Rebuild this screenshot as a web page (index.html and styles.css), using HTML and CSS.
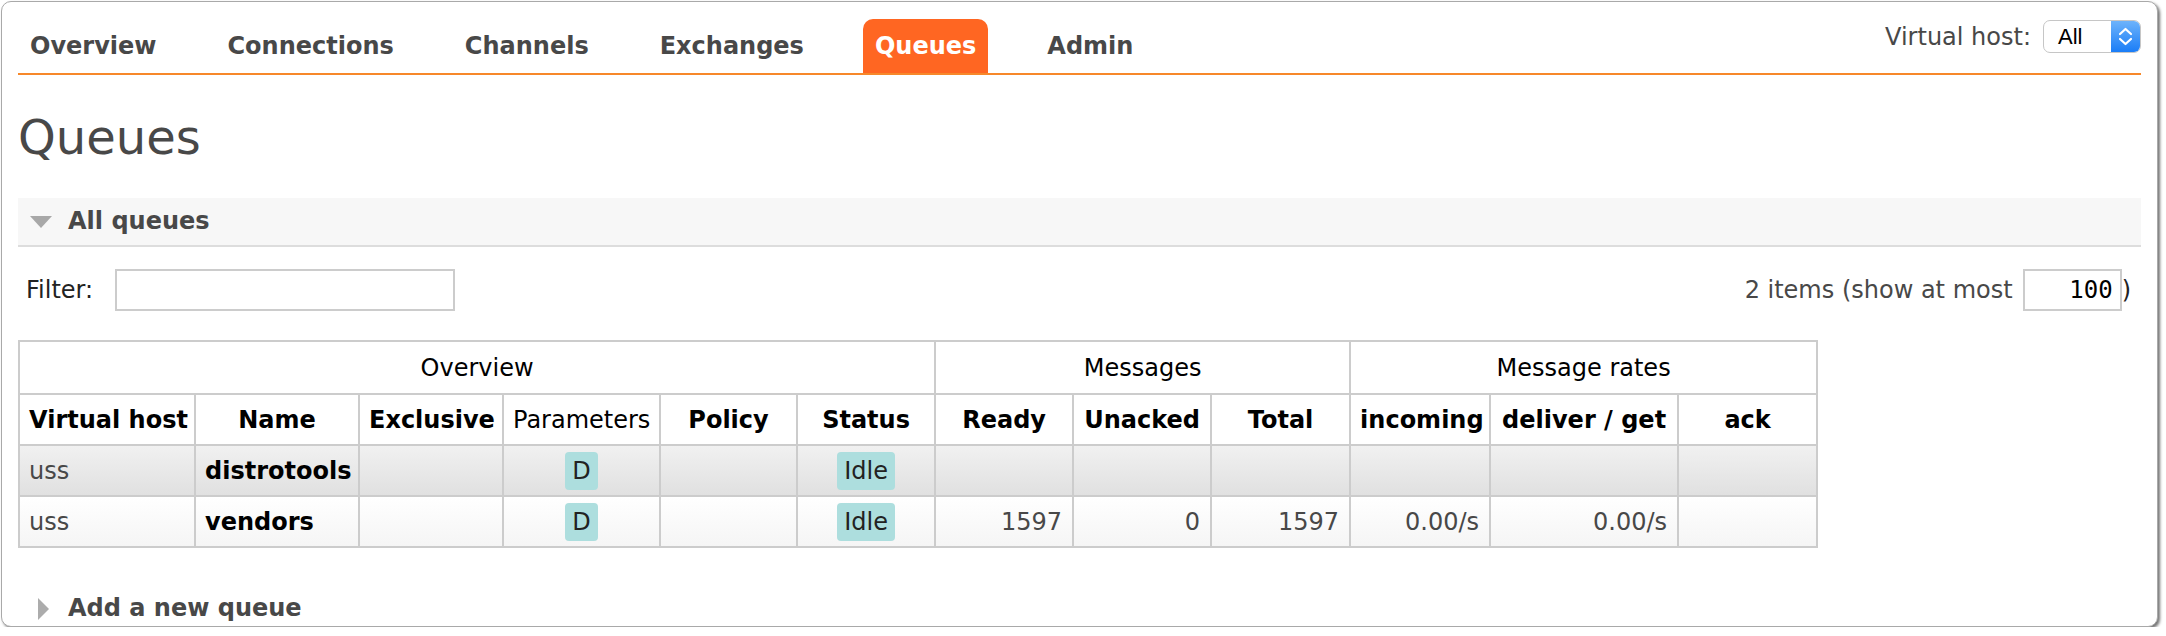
FILE: index.html
```html
<!DOCTYPE html>
<html>
<head>
<meta charset="utf-8">
<title>Queues</title>
<link rel="stylesheet" href="styles.css">
</head>
<body>
<div class="window">
  <header class="topbar">
    <ul class="menu">
      <li><a href="#">Overview</a></li>
      <li><a href="#">Connections</a></li>
      <li><a href="#">Channels</a></li>
      <li><a href="#">Exchanges</a></li>
      <li><a href="#" class="selected">Queues</a></li>
      <li><a href="#">Admin</a></li>
    </ul>
    <div class="vhost">
      <span>Virtual host:</span>
      <div class="select">
        <span class="select-value">All</span>
        <span class="select-arrows">
          <svg width="15" height="21" viewBox="0 0 15 21"><polyline points="2,8 7.5,3 13,8" fill="none" stroke="#fff" stroke-width="2.2" stroke-linecap="round" stroke-linejoin="round"/><polyline points="2,13 7.5,18 13,13" fill="none" stroke="#fff" stroke-width="2.2" stroke-linecap="round" stroke-linejoin="round"/></svg>
        </span>
      </div>
    </div>
  </header>

  <h1 class="title">Queues</h1>

  <section class="section">
    <h2 class="section-head"><span class="tri-down"></span>All queues</h2>
    <div class="filter-row">
      <div class="filter">
        <label>Filter:</label>
        <input class="filter-input" type="text">
      </div>
      <div class="count">
        <span>2 items (show at most</span>
        <input class="count-input" type="text" value="100"><span class="paren">)</span>
      </div>
    </div>

    <table class="list">
      <colgroup>
        <col style="width:176px"><col style="width:164px"><col style="width:144px"><col style="width:157px"><col style="width:137px"><col style="width:138px"><col style="width:138px"><col style="width:138px"><col style="width:139px"><col style="width:140px"><col style="width:188px"><col style="width:139px">
      </colgroup>
      <thead>
        <tr class="group">
          <th colspan="6">Overview</th>
          <th colspan="3">Messages</th>
          <th colspan="3">Message rates</th>
        </tr>
        <tr class="cols">
          <th>Virtual host</th>
          <th>Name</th>
          <th>Exclusive</th>
          <th class="plain">Parameters</th>
          <th>Policy</th>
          <th>Status</th>
          <th>Ready</th>
          <th>Unacked</th>
          <th>Total</th>
          <th>incoming</th>
          <th>deliver / get</th>
          <th>ack</th>
        </tr>
      </thead>
      <tbody>
        <tr class="alt1">
          <td>uss</td>
          <td class="name">distrotools</td>
          <td></td>
          <td class="c"><abbr class="tag">D</abbr></td>
          <td></td>
          <td class="c"><span class="tag">Idle</span></td>
          <td class="num"></td>
          <td class="num"></td>
          <td class="num"></td>
          <td class="num"></td>
          <td class="num"></td>
          <td class="num"></td>
        </tr>
        <tr class="alt2">
          <td>uss</td>
          <td class="name">vendors</td>
          <td></td>
          <td class="c"><abbr class="tag">D</abbr></td>
          <td></td>
          <td class="c"><span class="tag">Idle</span></td>
          <td class="num">1597</td>
          <td class="num">0</td>
          <td class="num">1597</td>
          <td class="num">0.00/s</td>
          <td class="num">0.00/s</td>
          <td class="num"></td>
        </tr>
      </tbody>
    </table>
  </section>

  <h2 class="section-head collapsed"><span class="tri-right"></span>Add a new queue</h2>
</div>
</body>
</html>
```

FILE: styles.css
```css
* { box-sizing: border-box; }

body {
  margin: 0;
  background: #fff;
  font-family: "DejaVu Sans", Verdana, sans-serif;
  font-size: 24px;
  color: #484848;
}

.window {
  margin: 1px 0 0 1px;
  width: 2157px;
  height: 626px;
  border: 1px solid #a9a9a9;
  border-radius: 10px;
  box-shadow: 2px 2px 3px rgba(0, 0, 0, 0.55);
  overflow: hidden;
  padding: 17px 16px 0 16px;
  background: #fff;
}

/* top navigation */
.topbar {
  display: flex;
  justify-content: space-between;
  align-items: flex-start;
  border-bottom: 2px solid #f7882a;
}

.menu {
  display: flex;
  gap: 47px;
  list-style: none;
  margin: 0;
  padding: 0;
}

.menu a {
  display: block;
  padding: 0 12px;
  line-height: 54px;
  font-weight: bold;
  color: #484848;
  text-decoration: none;
  border-radius: 10px 10px 0 0;
}

.menu a.selected {
  background: #ff6622;
  color: #fff;
}

.vhost {
  display: flex;
  align-items: center;
  gap: 12px;
  margin-top: 1px;
  color: #484848;
}

.select {
  width: 98px;
  height: 33px;
  border: 1px solid #c6c6c6;
  border-radius: 7px;
  display: flex;
  overflow: hidden;
  font-family: "Liberation Sans", Arial, sans-serif;
  font-size: 22px;
  color: #000;
  background: #fff;
}

.select-value {
  flex: 1;
  padding-left: 14px;
  line-height: 31px;
}

.select-arrows {
  width: 29px;
  background: linear-gradient(#6db3fb, #1a7df7);
  display: flex;
  align-items: center;
  justify-content: center;
}

/* title */
.title {
  margin: 32px 0 0;
  font-size: 48px;
  font-weight: normal;
  line-height: 60px;
  color: #484848;
}

/* section headings */
.section-head {
  margin: 31px 0 0;
  height: 49px;
  background: #f7f7f7;
  border-bottom: 2px solid #dddddd;
  display: flex;
  align-items: center;
  font-size: 24px;
  font-weight: bold;
  line-height: 47px;
  color: #484848;
}

.tri-down {
  width: 0;
  height: 0;
  margin-left: 12px;
  margin-right: 16px;
  border-left: 11px solid transparent;
  border-right: 11px solid transparent;
  border-top: 12px solid #a8a8a8;
}

.section-head.collapsed {
  margin-top: 37px;
  height: 47px;
  background: none;
  border-bottom: 0;
}

.tri-right {
  width: 0;
  height: 0;
  margin-left: 20px;
  margin-right: 19px;
  border-top: 11px solid transparent;
  border-bottom: 11px solid transparent;
  border-left: 11px solid #acacac;
}

/* filter row */
.filter-row {
  margin-top: 22px;
  height: 42px;
  display: flex;
  justify-content: space-between;
  align-items: center;
}

.filter {
  display: flex;
  align-items: center;
  padding-left: 8px;
  color: #222;
}

.filter-input {
  margin: 0 0 0 22px;
  width: 340px;
  height: 42px;
  border: 2px solid #cccccc;
  background: #fff;
  font: inherit;
}

.count {
  display: flex;
  align-items: center;
  padding-right: 10px;
  color: #484848;
}

.count-input {
  margin: 0 0 0 10px;
  width: 99px;
  height: 42px;
  border: 2px solid #cccccc;
  background: #fff;
  padding: 0 7px 0 0;
  text-align: right;
  font-family: "DejaVu Sans Mono", monospace;
  font-size: 24px;
  color: #000;
}

.paren { color: #222; }

/* table */
.list {
  margin-top: 29px;
  margin-left: 0;
  width: 1798px;
  border-collapse: collapse;
  table-layout: fixed;
}

.list th,
.list td {
  box-sizing: content-box;
  border: 2px solid #cccccc;
  height: 49px;
  padding: 0 9px;
  white-space: nowrap;
  vertical-align: middle;
}

.list th {
  font-weight: bold;
  color: #000;
  text-align: center;
  background: #fff;
}

.list tr.group th {
  font-weight: normal;
  height: 51px;
}

.list th.plain { font-weight: normal; }

.list td {
  color: #484848;
  text-align: left;
}

.list td.name {
  font-weight: bold;
  color: #000;
}

.list td.c { text-align: center; }
.list td.num { text-align: right; padding-right: 10px; }

.list tr.alt1 { background: linear-gradient(#f1f1f1, #e0e0e0); }
.list tr.alt2 { background: linear-gradient(#ffffff, #f5f5f5); }

.tag {
  display: inline-block;
  padding: 0 7px;
  line-height: 38px;
  border-radius: 4px;
  background: #addede;
  color: #222;
  text-decoration: none;
}
```
